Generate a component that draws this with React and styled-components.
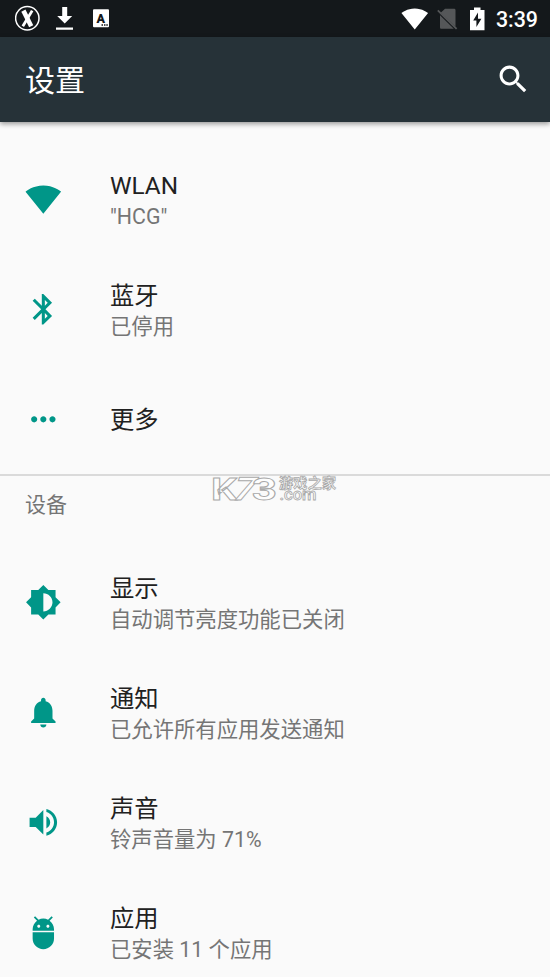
import styled, { createGlobalStyle } from "styled-components";

const GlobalStyle = createGlobalStyle`
	body {
		margin: 0;
		background-color: #fafafa;
		font-family: Roboto, "Noto Sans CJK SC", sans-serif;
	}
`

const Screen = styled.div`
	position: relative;
	width: 550px;
	height: 977px;
	overflow: hidden;
	background-color: #fafafa;
`

const StatusBar = styled.div`
	display: flex;
	justify-content: space-between;
	height: 37px;
	padding: 0 12px 0 15px;
	box-sizing: border-box;
	background-color: #14181b;
`

const StatusGroup = styled.div`
	display: flex;
	align-items: center;
	gap: ${props => props.$gap}px;
`

const Clock = styled.span`
	color: #fff;
	font-size: 21.4px;
	font-weight: 500;
	line-height: 37px;
	padding-top: 1px;
`

const Toolbar = styled.header`
	position: relative;
	display: flex;
	align-items: center;
	justify-content: space-between;
	height: 85px;
	padding: 0 18px 0 25px;
	box-sizing: border-box;
	background-color: #263238;
	box-shadow: 0 2px 5px rgba(0, 0, 0, 0.4);

	h1 {
		margin: 0;
		padding-top: 3px;
		color: #fff;
		font-size: 30px;
		font-weight: 400;
		line-height: 40px;
	}
`

const Section = styled.section`
	padding-top: ${props => props.$top}px;
	border-bottom: ${props => props.$divided ? "2px solid #dadada" : "none"};
`

const SectionTitle = styled.h2`
	margin: 0;
	padding: 14px 25px 26px;
	color: #757575;
	font-size: 21px;
	font-weight: 400;
	line-height: 31px;
`

const Row = styled.div`
	display: flex;
	align-items: center;
	height: 110px;
	padding-left: 24.5px;
	box-sizing: border-box;
`

const RowText = styled.div`
	margin-left: 48.8px;
	padding-top: ${props => props.$double ? 4 : 1}px;
`

const Title = styled.div`
	color: #212121;
	font-size: 24.3px;
	line-height: 31px;
`

const Summary = styled.div`
	color: #757575;
	font-size: 21.35px;
	line-height: 31px;
`

const Icon = styled.svg`
	display: block;
	flex: none;
	width: ${props => props.$size || 36.67}px;
	height: ${props => props.$size || 36.67}px;
	fill: ${props => props.$color || "#009688"};
`

const StatusIcon = styled.svg`
	display: block;
	flex: none;
`

// laid over the list, does not take part in its flow
const Watermark = styled.svg`
	position: absolute;
	left: 208px;
	top: 466px;
	overflow: visible;
	fill: #fdfdfd;
	stroke: #a9a9a9;
`

const icons = {
	wifi: "M12.01 21.49L23.64 7c-.45-.34-4.93-4-11.64-4C5.28 3 .81 6.66.36 7l11.63 14.49.01.01.01-.01z",
	bluetooth: "M17.71 7.71L12 2h-1v7.59L6.41 5 5 6.41 10.59 12 5 17.59 6.41 19 11 14.41V22h1l5.71-5.71-4.3-4.29 4.3-4.29zM13 5.83l1.88 1.88L13 9.59V5.83zm1.88 10.46L13 18.17v-3.76l1.88 1.88z",
	more: "M6 10c-1.1 0-2 .9-2 2s.9 2 2 2 2-.9 2-2-.9-2-2-2zm12 0c-1.1 0-2 .9-2 2s.9 2 2 2 2-.9 2-2-.9-2-2-2zm-6 0c-1.1 0-2 .9-2 2s.9 2 2 2 2-.9 2-2-.9-2-2-2z",
	display: "M20 15.31L23.31 12 20 8.69V4h-4.69L12 .69 8.69 4H4v4.69L.69 12 4 15.31V20h4.69L12 23.31 15.31 20H20v-4.69zM12 18V6c3.31 0 6 2.69 6 6s-2.69 6-6 6z",
	bell: "M12 22c1.1 0 2-.9 2-2h-4c0 1.1.89 2 2 2zm6-6v-5c0-3.07-1.64-5.64-4.5-6.32V4c0-.83-.67-1.5-1.5-1.5s-1.5.67-1.5 1.5v.68C7.63 5.36 6 7.92 6 11v5l-2 2v1h16v-1l-2-2z",
	sound: "M3 9v6h4l5 5V4L7 9H3zm13.5 3c0-1.77-1.02-3.29-2.5-4.03v8.05c1.48-.73 2.5-2.25 2.5-4.02zM14 3.23v2.06c2.89.86 5 3.54 5 6.71s-2.11 5.85-5 6.71v2.06c4.01-.91 7-4.49 7-8.77s-2.99-7.86-7-8.77z",
	android: "M5 16c0 3.87 3.13 7 7 7s7-3.13 7-7v-4H5v4zM16.12 4.37l2.1-2.1-.82-.83-2.3 2.31C14.16 3.28 13.12 3 12 3s-2.16.28-3.09.75L6.6 1.44l-.82.83 2.1 2.1C6.14 5.64 5 7.68 5 10v1h14v-1c0-2.32-1.14-4.36-2.88-5.63zM9 9c-.55 0-1-.45-1-1s.45-1 1-1 1 .45 1 1-.45 1-1 1zm6 0c-.55 0-1-.45-1-1s.45-1 1-1 1 .45 1 1-.45 1-1 1z",
	search: "M15.5 14h-.79l-.28-.27C15.41 12.59 16 11.11 16 9.5 16 5.91 13.09 3 9.5 3S3 5.91 3 9.5 5.91 16 9.5 16c1.61 0 3.09-.59 4.23-1.57l.27.28v.79l5 4.99L20.49 19l-4.99-5zm-6 0C7.01 14 5 11.99 5 9.5S7.01 5 9.5 5 14 7.01 14 9.5 11.99 14 9.5 14z",
}

const network = [
	{ icon: "wifi", title: "WLAN", summary: '"HCG"' },
	{ icon: "bluetooth", title: "蓝牙", summary: "已停用" },
	{ icon: "more", title: "更多" },
]

const device = [
	{ icon: "display", title: "显示", summary: "自动调节亮度功能已关闭" },
	{ icon: "bell", title: "通知", summary: "已允许所有应用发送通知" },
	{ icon: "sound", title: "声音", summary: "铃声音量为 71%" },
	{ icon: "android", title: "应用", summary: "已安装 11 个应用" },
]

const Glyph = props => (
	<Icon viewBox="0 0 24 24" $size={props.size} $color={props.color}>
		<path d={icons[props.name]} />
	</Icon>
)

const SettingRow = props => {
	return (
		<Row>
			<Glyph name={props.icon} />
			<RowText $double={!!props.summary}>
				<Title>{props.title}</Title>
				{props.summary && <Summary>{props.summary}</Summary>}
			</RowText>
		</Row>
	)
}

const App = () => {
	return (
		<Screen>
			<GlobalStyle />
			<StatusBar>
				<StatusGroup $gap={0}>
					<StatusIcon width="96" height="37" viewBox="15 0 96 37">
						<circle cx="27.3" cy="18.3" r="11.7" fill="none" stroke="#fff" strokeWidth="1.5" />
						<path d="M23.4 10.6l7.8 15.6" stroke="#fff" strokeWidth="4.6" />
						<path d="M32.2 10.6l-9.4 15.6" stroke="#fff" strokeWidth="2.8" />
						<path d="M62.2 7h5v9h5L64.7 23.5 57.2 16h5zM56 27.5h17v2.3H56z" fill="#fff" />
						<rect x="93" y="9.3" width="16" height="18" rx="1" fill="#fff" />
						<text x="100.8" y="22.6" textAnchor="middle" fontSize="12.5" fontWeight="900" fill="#14181b">A</text>
						<path d="M101.5 24.2h1.5v1.5h-1.5zM104 24.2h1.5v1.5H104zM106.3 24.2h1.5v1.5h-1.5z" fill="#14181b" />
					</StatusIcon>
				</StatusGroup>
				<StatusGroup $gap={8}>
					<Glyph name="wifi" size={27.5} color="#fff" />
					<StatusIcon width="21" height="22" viewBox="0 0 21 22">
						<path d="M8 .8h9c1 0 1.5.5 1.5 1.5v16.5L3.7 4.8z M3 7.2l13.8 13.5H4.5c-1 0-1.5-.5-1.5-1.5z" fill="#555759" />
						<path d="M.8 2.3l18.8 18.5" stroke="#555759" strokeWidth="1.8" />
					</StatusIcon>
					<StatusIcon width="22" height="24" viewBox="1 0 22 24">
						<path d="M9 .5h6.5V3h4v20.2H5V3h4zM13 5.5L8.2 13.5h3.2V20l5-8.3h-3.4z" fill="#fff" fillRule="evenodd" />
					</StatusIcon>
					<Clock>3:39</Clock>
				</StatusGroup>
			</StatusBar>
			<Toolbar>
				<h1>设置</h1>
				<Glyph name="search" color="#fff" />
			</Toolbar>
			<Section $top={22} $divided>
				{network.map(item => <SettingRow key={item.icon} {...item} />)}
			</Section>
			<Section $top={0}>
				<SectionTitle>设备</SectionTitle>
				{device.map(item => <SettingRow key={item.icon} {...item} />)}
			</Section>
			<Watermark width="134" height="46" viewBox="0 0 134 46">
				<text x="3" y="34" fontSize="32" fontWeight="700" textLength="26" lengthAdjust="spacingAndGlyphs" strokeWidth=".9">K</text>
				<text transform="translate(23 34) skewX(-18)" fontSize="32" fontWeight="700" textLength="22" lengthAdjust="spacingAndGlyphs" strokeWidth=".9">7</text>
				<text x="44" y="34" fontSize="32" fontWeight="700" textLength="25" lengthAdjust="spacingAndGlyphs" strokeWidth=".9">3</text>
				<text x="71" y="21.5" fontSize="14" fontWeight="700" textLength="57" strokeWidth=".8">游戏之家</text>
				<text x="71.5" y="34" fontSize="16" fontWeight="500" textLength="37" lengthAdjust="spacingAndGlyphs" strokeWidth=".8">.com</text>
			</Watermark>
		</Screen>
	)
}
export default App;
